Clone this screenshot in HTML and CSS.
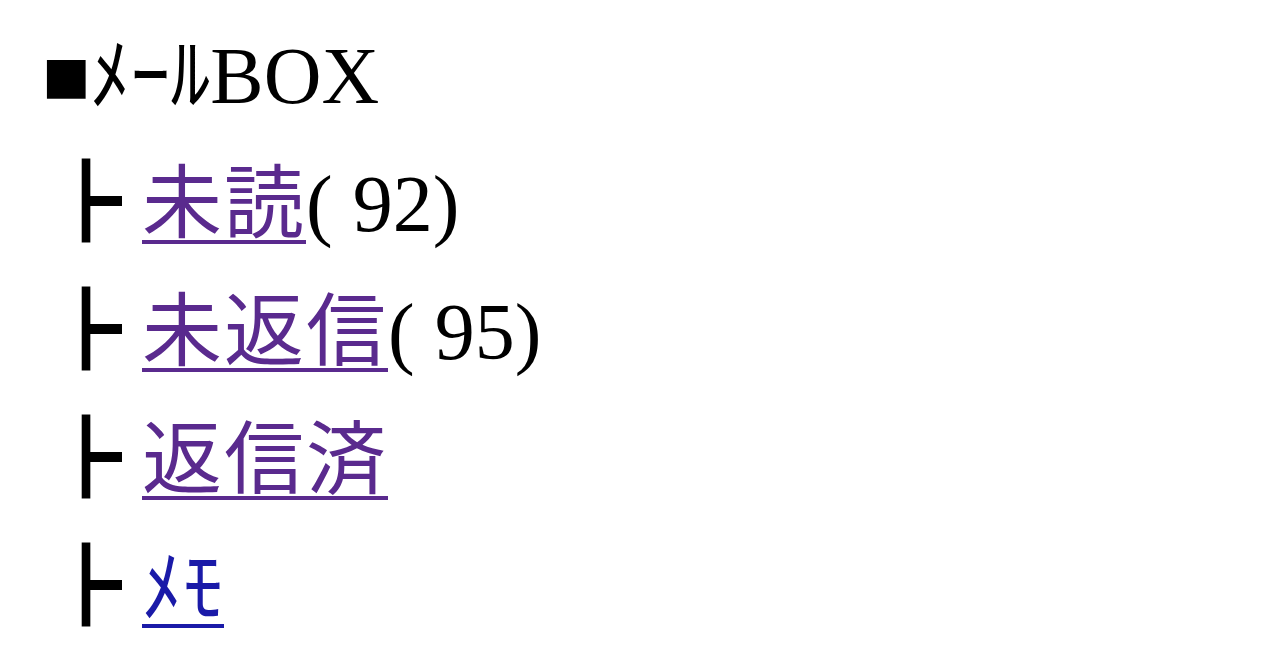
FILE: index.html
```html
<!DOCTYPE html>
<html lang="ja">
<head>
<meta charset="utf-8">
<title>メールBOX</title>
<link rel="stylesheet" href="styles.css">
</head>
<body>
<div class="menu">
  <div class="row head">■ﾒｰﾙBOX</div>
  <div class="row"><span class="mark">┣</span> <a class="seen" href="#">未読</a>( 92)</div>
  <div class="row"><span class="mark">┣</span> <a class="seen" href="#">未返信</a>( 95)</div>
  <div class="row"><span class="mark">┣</span> <a class="seen" href="#">返信済</a></div>
  <div class="row"><span class="mark">┣</span> <a class="fresh" href="#">ﾒﾓ</a></div>
</div>
</body>
</html>
```
FILE: styles.css
```css
html, body {
  margin: 0;
  background: #ffffff;
}
body {
  padding: 12px 0 0 42px;
  font-family: "Liberation Serif", "Noto Sans CJK JP", serif;
  font-size: 80px;
  color: #000000;
  overflow: hidden;
}
.row {
  height: 128px;
  line-height: 128px;
  white-space: nowrap;
}
.mark {
  display: inline-block;
  line-height: 0;
  font-family: "Noto Sans CJK JP", sans-serif;
  transform: scale(0.9, 1.04);
  transform-origin: right center;
}
a {
  text-decoration: underline;
  text-decoration-thickness: 4px;
  text-underline-offset: 9px;
}
a.seen {
  color: #5a2a8e;
  letter-spacing: 2px;
}
a.fresh {
  color: #1a1aa8;
  letter-spacing: 1px;
}
```
